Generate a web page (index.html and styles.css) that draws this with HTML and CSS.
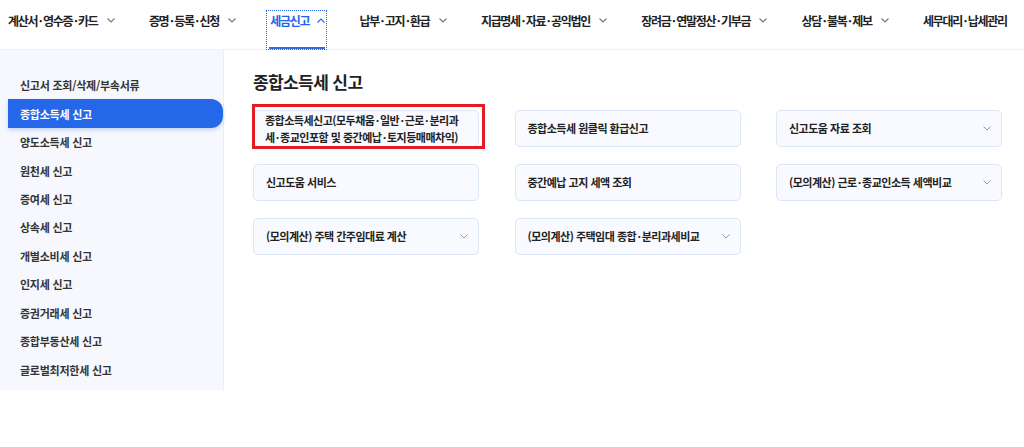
FILE: index.html
```html
<!DOCTYPE html>
<html lang="ko">
<head>
<meta charset="utf-8">
<title>종합소득세 신고</title>
<link rel="stylesheet" href="styles.css">
</head>
<body>
<nav class="gnb">
  <div class="gnb-item"><span>계산서<span class="d">·</span>영수증<span class="d">·</span>카드</span><svg class="chev" viewBox="0 0 8 5"><polyline points="0.5,0.5 4,4 7.5,0.5"/></svg></div>
  <div class="gnb-item"><span>증명<span class="d">·</span>등록<span class="d">·</span>신청</span><svg class="chev" viewBox="0 0 8 5"><polyline points="0.5,0.5 4,4 7.5,0.5"/></svg></div>
  <div class="gnb-item active"><span>세금신고</span><svg class="chev" viewBox="0 0 8 5"><polyline points="0.5,4.5 4,1 7.5,4.5"/></svg></div>
  <div class="gnb-item"><span>납부<span class="d">·</span>고지<span class="d">·</span>환급</span><svg class="chev" viewBox="0 0 8 5"><polyline points="0.5,0.5 4,4 7.5,0.5"/></svg></div>
  <div class="gnb-item"><span>지급명세<span class="d">·</span>자료<span class="d">·</span>공익법인</span><svg class="chev" viewBox="0 0 8 5"><polyline points="0.5,0.5 4,4 7.5,0.5"/></svg></div>
  <div class="gnb-item"><span>장려금<span class="d">·</span>연말정산<span class="d">·</span>기부금</span><svg class="chev" viewBox="0 0 8 5"><polyline points="0.5,0.5 4,4 7.5,0.5"/></svg></div>
  <div class="gnb-item"><span>상담<span class="d">·</span>불복<span class="d">·</span>제보</span><svg class="chev" viewBox="0 0 8 5"><polyline points="0.5,0.5 4,4 7.5,0.5"/></svg></div>
  <div class="gnb-item"><span>세무대리<span class="d">·</span>납세관리</span></div>
</nav>
<div class="layout">
  <aside class="side">
    <ul class="side-list">
      <li class="side-item">신고서 조회/삭제/부속서류</li>
      <li class="side-item on">종합소득세 신고</li>
      <li class="side-item">양도소득세 신고</li>
      <li class="side-item">원천세 신고</li>
      <li class="side-item">증여세 신고</li>
      <li class="side-item">상속세 신고</li>
      <li class="side-item">개별소비세 신고</li>
      <li class="side-item">인지세 신고</li>
      <li class="side-item">증권거래세 신고</li>
      <li class="side-item">종합부동산세 신고</li>
      <li class="side-item">글로벌최저한세 신고</li>
    </ul>
  </aside>
  <main class="content">
    <h2 class="title">종합소득세 신고</h2>
    <div class="cards">
      <div class="card marked"><span>종합소득세신고(모두채움<span class="d">·</span>일반<span class="d">·</span>근로<span class="d">·</span>분리과<br>세<span class="d">·</span>종교인포함 및 중간예납<span class="d">·</span>토지등매매차익)</span></div>
      <div class="card"><span>종합소득세 원클릭 환급신고</span></div>
      <div class="card"><span>신고도움 자료 조회</span><svg class="chev gray" viewBox="0 0 8 5"><polyline points="0.5,0.5 4,4 7.5,0.5"/></svg></div>
      <div class="card"><span>신고도움 서비스</span></div>
      <div class="card"><span>중간예납 고지 세액 조회</span></div>
      <div class="card"><span>(모의계산) 근로<span class="d">·</span>종교인소득 세액비교</span><svg class="chev gray" viewBox="0 0 8 5"><polyline points="0.5,0.5 4,4 7.5,0.5"/></svg></div>
      <div class="card"><span>(모의계산) 주택 간주임대료 계산</span><svg class="chev gray" viewBox="0 0 8 5"><polyline points="0.5,0.5 4,4 7.5,0.5"/></svg></div>
      <div class="card"><span>(모의계산) 주택임대 종합<span class="d">·</span>분리과세비교</span><svg class="chev gray" viewBox="0 0 8 5"><polyline points="0.5,0.5 4,4 7.5,0.5"/></svg></div>
    </div>
  </main>
</div>
</body>
</html>
```
FILE: styles.css
```css
* { box-sizing: border-box; }
html, body { margin: 0; padding: 0; background: #fff; }
body {
  font-family: "Noto Sans CJK KR", "Noto Sans", sans-serif;
  color: #222;
  width: 1024px;
  height: 447px;
  overflow: hidden;
}
.gnb {
  height: 50px;
  display: flex;
  align-items: flex-start;
  padding: 10px 0 0 4px;
  gap: 28.3px;
  white-space: nowrap;
  border-bottom: 1px solid #eef1f6;
}
.gnb-item {
  height: 40px;
  display: flex;
  align-items: flex-start;
  padding: 2px 2px 0 4px;
  font-size: 12px;
  line-height: 17px;
  letter-spacing: -1.3px;
  font-weight: 700;
  color: #222;
  position: relative;
  flex-shrink: 0;
}
.gnb-item .d { margin: 0 1.6px; }
.gnb-item .chev {
  width: 8px;
  height: 5px;
  margin: 6px 0 0 9px;
  fill: none;
  stroke: #777;
  stroke-width: 1.1;
}
.gnb-item.active {
  color: #2563e8;
  outline: 1px dotted #2563e8;
  outline-offset: -1px;
}
.gnb-item.active .chev { stroke: #2563e8; margin-left: 8px; }
.gnb-item.active::after {
  content: "";
  position: absolute;
  left: 3px;
  right: 2px;
  bottom: 1px;
  height: 2px;
  background: #2e6be6;
}
.layout {
  display: flex;
  align-items: flex-start;
}
.side {
  width: 224px;
  height: 340px;
  background: #f6f8fd;
  border-right: 1px solid #e9eef6;
  padding-top: 21px;
}
.side-list { list-style: none; margin: 0; padding: 0; }
.side-item {
  height: 28.45px;
  display: flex;
  align-items: center;
  padding-left: 12px;
  margin-left: 8px;
  font-size: 11px;
  letter-spacing: -0.25px;
  font-weight: 700;
  color: #333;
}
.side-item.on {
  background: #2467e9;
  color: #fff;
  border-radius: 0 12px 12px 0;
  box-shadow: 0 2px 4px rgba(36, 103, 233, 0.25);
}
.content {
  flex: 1;
  padding: 19px 0 0 29px;
}
.title {
  margin: 0 0 16px;
  font-size: 17px;
  line-height: 25px;
  font-weight: 700;
  letter-spacing: -0.6px;
  color: #222;
}
.cards {
  display: grid;
  grid-template-columns: repeat(3, 226px);
  grid-auto-rows: 37px;
  column-gap: 35.5px;
  row-gap: 17px;
}
.card {
  position: relative;
  display: flex;
  align-items: center;
  justify-content: space-between;
  padding: 0 10px 0 12px;
  background: #f8faff;
  border: 1px solid #dde6f6;
  border-radius: 5px;
  font-size: 11px;
  line-height: 17px;
  letter-spacing: -0.5px;
  font-weight: 700;
  color: #222;
  white-space: nowrap;
}
.card .d { margin: 0 1.2px; }
.card.marked { padding-left: 11px; }
.card.marked::after {
  content: "";
  position: absolute;
  left: -2px;
  top: -7px;
  right: -7px;
  bottom: -3px;
  border: 3px solid #e31b23;
}
.card .chev {
  width: 8px;
  height: 5px;
  flex-shrink: 0;
  fill: none;
  stroke: #999;
  stroke-width: 1;
}
```
